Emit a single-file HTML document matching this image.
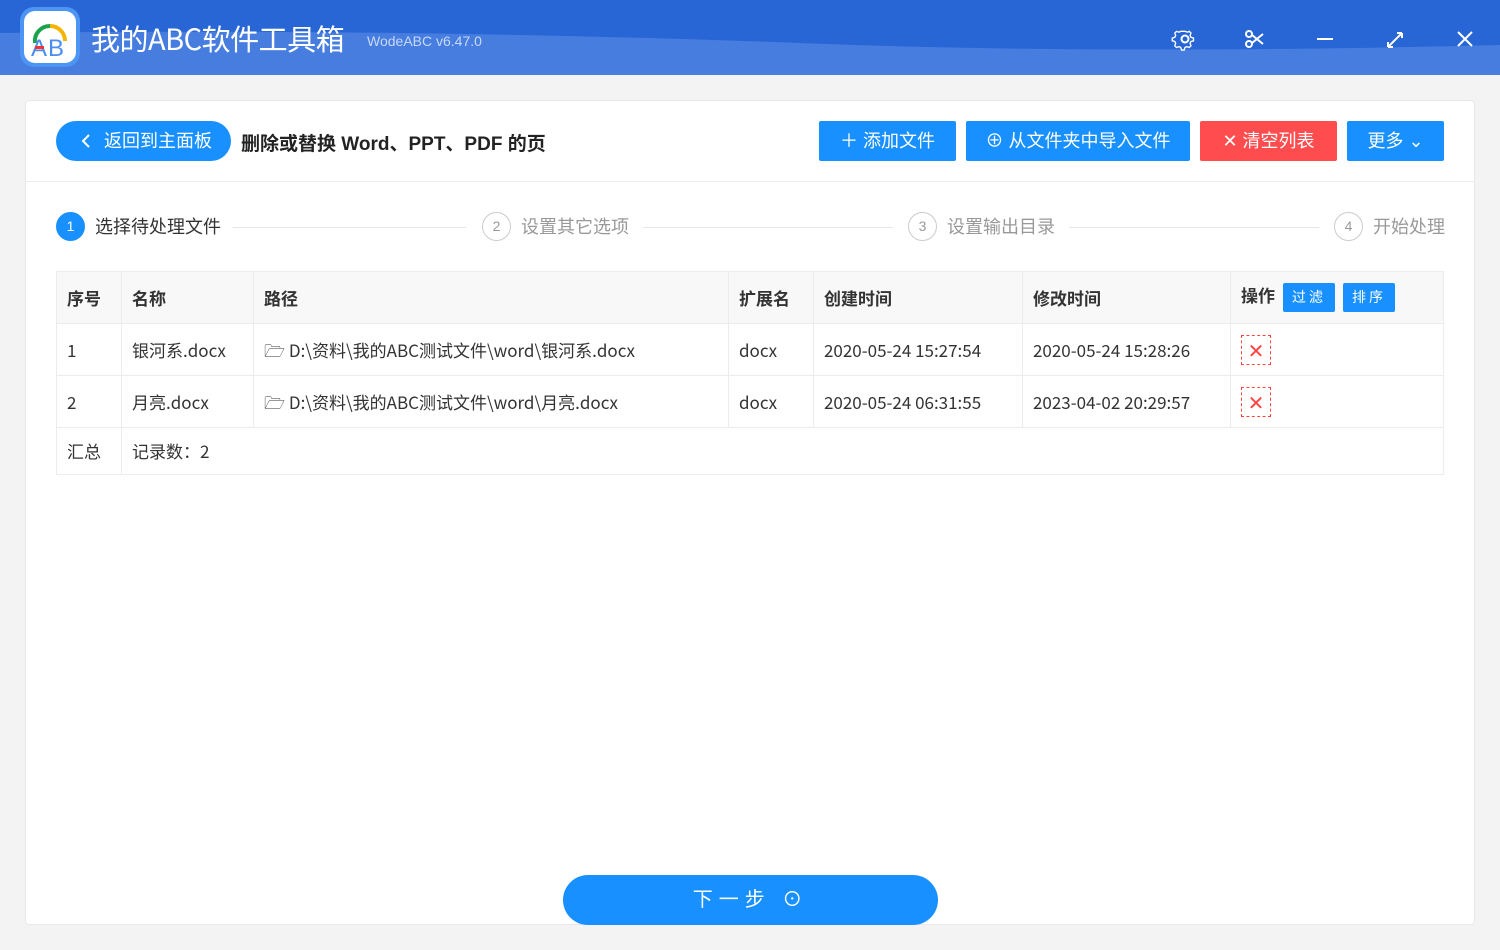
<!DOCTYPE html>
<html><head><meta charset="utf-8"><style>
*{margin:0;padding:0;box-sizing:border-box}
body{width:1500px;height:950px;background:#f3f3f3;font-family:"Liberation Sans","Noto Sans CJK SC",sans-serif;position:relative;overflow:hidden;color:#333}
.top{position:absolute;left:0;top:0;width:1500px;height:75px;background:#2866d5;overflow:hidden}
.abs{position:absolute}
.card{position:absolute;left:25px;top:100px;width:1450px;height:825px;background:#fff;border:1px solid #e8e8e8;border-radius:4px}
.btn{position:absolute;top:121px;height:40px;color:#fff;font-size:18px;line-height:40px;text-align:center;border-radius:2px}
table{position:absolute;left:56px;top:271px;width:1388px;border-collapse:collapse;font-size:17px;table-layout:fixed}
td{border:1px solid #ececec;padding:0 10px;height:52px;line-height:20px;vertical-align:middle;white-space:nowrap;overflow:hidden}
td span,td{font-family:"Noto Sans CJK SC","Liberation Sans",sans-serif}
tr.h td{background:#f8f8f8;font-weight:bold;height:52px}
.x{display:inline-block;width:30px;height:30px;border:1px dashed #f44;color:#f44;text-align:center;line-height:28px;font-size:20px;vertical-align:middle}
.tb{display:inline-block;background:#1890ff;color:#fff;font-size:14px;font-weight:normal;padding:0 9px;height:29px;line-height:29px;border-radius:2px;margin-left:8px;vertical-align:middle;letter-spacing:3px}
.step{position:absolute;top:212px;font-size:18px;color:#999;line-height:30px}
.c{display:inline-block;width:29px;height:29px;border:1px solid #ccc;border-radius:50%;text-align:center;line-height:27px;font-size:14px;margin-right:10px;vertical-align:top}
.ln{position:absolute;top:227px;height:1px;background:#e6e6e6}
</style></head><body>
<div class="top">
<svg class="abs" style="left:0;top:0" width="1500" height="75"><path d="M0 33 Q400 28 800 43 Q1100 55 1500 45 L1500 75 L0 75Z" fill="#467ddf"/></svg>
<div class="abs" style="left:20px;top:7px;width:60px;height:60px;background:#4d95f5;border-radius:14px"></div>
<div class="abs" style="left:24px;top:11px;width:52px;height:52px;background:#fff;border-radius:11px"></div>
<svg class="abs" style="left:24px;top:11px" width="52" height="52"><path d="M11 32 A15 15 0 0 1 26 15" stroke="#1aa34a" stroke-width="4" fill="none"/><path d="M26 15 A15 15 0 0 1 41 30" stroke="#f5b400" stroke-width="4" fill="none"/><text x="7" y="45" font-size="24" font-family="Liberation Sans" fill="#4a8df2">A</text><text x="24" y="45" font-size="24" font-family="Liberation Sans" fill="#4a8df2">B</text><rect x="11" y="35" width="9" height="3" fill="#e33"/></svg>
<div class="abs" style="left:91px;top:18px;font-size:29px;color:#fff;line-height:40px;font-family:'Noto Sans CJK SC','Liberation Sans',sans-serif;letter-spacing:-0.5px">我的ABC软件工具箱</div>
<div class="abs" style="left:367px;top:33px;font-size:14px;color:#c8d8f8">WodeABC v6.47.0</div>
<svg class="abs" style="left:1170px;top:25px" width="310" height="30" fill="none" stroke="#fff" stroke-width="2"><circle cx="15" cy="14" r="3.5"/><path d="M15 5l3 1 2-1 2 2-1 3 1 2 3 1v3l-3 1-1 2 1 3-2 2-3-1-2 1-1 3h-3l-1-3-2-1-3 1-2-2 1-3-1-2-3-1v-3l3-1 1-2-1-3 2-2 3 1 2-1z" stroke-width="1.6" transform="translate(15 14) scale(0.85) translate(-15 -14)"/><circle cx="79" cy="9" r="3"/><circle cx="79" cy="19" r="3"/><path d="M82 10l11 9M82 18l11-9"/><path d="M147 14h16"/><path d="M218 22l14-14M218 22v-5M218 22h5M232 8h-5M232 8v5"/><path d="M288 7l14 14M302 7l-14 14"/></svg>
</div>
<div class="card"></div>
<div class="abs" style="left:56px;top:121px;width:175px;height:40px;background:#1890ff;border-radius:20px;color:#fff;font-size:18px;line-height:40px;padding-left:48px">返回到主面板</div>
<svg class="abs" style="left:80px;top:133px" width="12" height="16"><path d="M9 2L3 8l6 6" stroke="#fff" stroke-width="2" fill="none"/></svg>
<div class="abs" style="left:241px;top:129px;font-size:19px;font-weight:bold;color:#222">删除或替换 Word、PPT、PDF 的页</div>
<div class="btn" style="left:819px;width:137px;background:#1890ff">＋ 添加文件</div>
<div class="btn" style="left:966px;width:224px;background:#1890ff">⊕ 从文件夹中导入文件</div>
<div class="btn" style="left:1200px;width:137px;background:#ff4d4f">✕ 清空列表</div>
<div class="btn" style="left:1347px;width:97px;background:#1890ff">更多 ⌄</div>
<div class="abs" style="left:26px;top:181px;width:1448px;height:1px;background:#ececec"></div>
<div class="step" style="left:56px;color:#333"><span class="c" style="background:#1890ff;border-color:#1890ff;color:#fff">1</span>选择待处理文件</div>
<div class="ln" style="left:233px;width:233px"></div>
<div class="step" style="left:482px"><span class="c">2</span>设置其它选项</div>
<div class="ln" style="left:643px;width:250px"></div>
<div class="step" style="left:908px"><span class="c">3</span>设置输出目录</div>
<div class="ln" style="left:1069px;width:250px"></div>
<div class="step" style="left:1334px"><span class="c">4</span>开始处理</div>
<table>
<colgroup><col style="width:65px"><col style="width:132px"><col style="width:475px"><col style="width:85px"><col style="width:209px"><col style="width:208px"><col></colgroup>
<tr class="h"><td>序号</td><td>名称</td><td>路径</td><td>扩展名</td><td>创建时间</td><td>修改时间</td><td>操作<span class="tb">过滤</span><span class="tb">排序</span></td></tr>
<tr><td>1</td><td>银河系.docx</td><td>🗁 D:\资料\我的ABC测试文件\word\银河系.docx</td><td>docx</td><td>2020-05-24 15:27:54</td><td>2020-05-24 15:28:26</td><td><span class="x">✕</span></td></tr>
<tr><td>2</td><td>月亮.docx</td><td>🗁 D:\资料\我的ABC测试文件\word\月亮.docx</td><td>docx</td><td>2020-05-24 06:31:55</td><td>2023-04-02 20:29:57</td><td><span class="x">✕</span></td></tr>
<tr><td style="height:47px">汇总</td><td colspan="6" style="height:47px">记录数：2</td></tr>
</table>
<div class="abs" style="left:563px;top:875px;width:375px;height:50px;background:#1890ff;border-radius:25px;color:#fff;font-size:20px;line-height:50px;text-align:center;letter-spacing:6px">下一步 ⊙</div>
</body></html>
